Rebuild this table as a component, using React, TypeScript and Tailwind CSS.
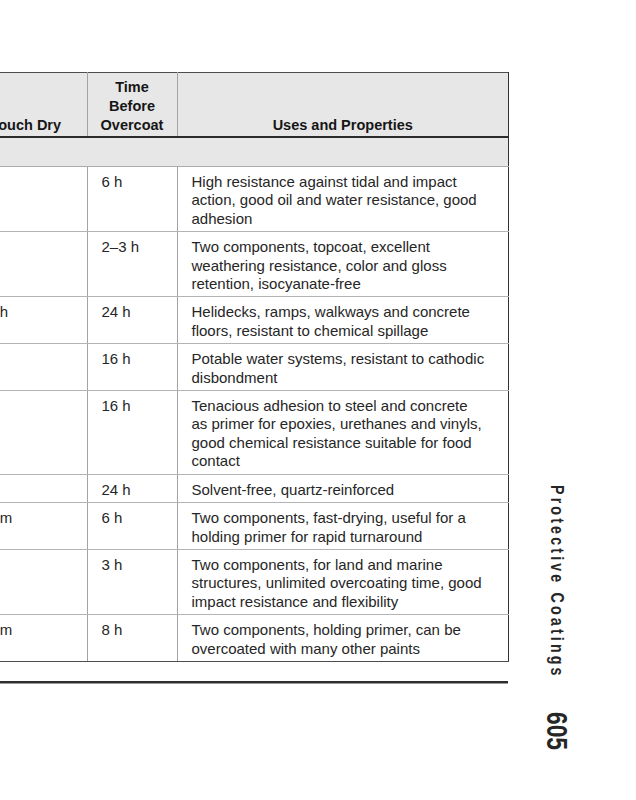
const rows = [
  {
    dry: "",
    time: "6 h",
    uses: ["High resistance against tidal and impact", "action, good oil and water resistance, good", "adhesion"],
  },
  {
    dry: "",
    time: "2–3 h",
    uses: ["Two components, topcoat, excellent", "weathering resistance, color and gloss", "retention, isocyanate-free"],
  },
  {
    dry: "24 h",
    time: "24 h",
    uses: ["Helidecks, ramps, walkways and concrete", "floors, resistant to chemical spillage"],
  },
  {
    dry: "",
    time: "16 h",
    uses: ["Potable water systems, resistant to cathodic", "disbondment"],
  },
  {
    dry: "",
    time: "16 h",
    uses: [
      "Tenacious adhesion to steel and concrete",
      "as primer for epoxies, urethanes and vinyls,",
      "good chemical resistance suitable for food",
      "contact",
    ],
  },
  {
    dry: "",
    time: "24 h",
    uses: ["Solvent-free, quartz-reinforced"],
  },
  {
    dry: "30 m",
    time: "6 h",
    uses: ["Two components, fast-drying, useful for a", "holding primer for rapid turnaround"],
  },
  {
    dry: "",
    time: "3 h",
    uses: ["Two components, for land and marine", "structures, unlimited overcoating time, good", "impact resistance and flexibility"],
  },
  {
    dry: "30 m",
    time: "8 h",
    uses: ["Two components, holding primer, can be", "overcoated with many other paints"],
  },
];

function CoatingsTable() {
  return (
    <table className="w-full table-fixed border-collapse text-[15px] leading-[18.4px] text-[#262626]">
      <colgroup>
        <col className="w-[122px]" />
        <col className="w-[90px]" />
        <col />
      </colgroup>
      <thead>
        <tr className="bg-[#e7e7e7] border-t border-t-[#4d4d4d] border-b-2 border-b-[#2b2b2b] text-[14.5px] leading-[19px] font-bold text-[#161616]">
          <th className="h-[64px] align-bottom pb-[1px] text-center border-r border-r-[#a3a3a3]">Touch Dry</th>
          <th className="align-bottom pb-[1px] text-center border-r border-r-[#a3a3a3]">
            Time
            <br />
            Before
            <br />
            Overcoat
          </th>
          <th className="align-bottom pb-[1px] text-center border-r border-r-[#333]">Uses and Properties</th>
        </tr>
      </thead>
      <tbody>
        <tr>
          <td colSpan={3} className="h-[30px] bg-[#e7e7e7] border-b border-b-[#ababab] border-r border-r-[#333]" />
        </tr>
        {rows.map((r, i) => {
          const last = i === rows.length - 1;
          const bottom = last ? "border-b border-b-[#4d4d4d]" : "border-b border-b-[#b4b4b4]";
          return (
            <tr key={i}>
              <td className={`align-top pt-[6px] pb-[3px] pl-[14px] whitespace-nowrap border-r border-r-[#a3a3a3] ${bottom}`}>
                {r.dry}
              </td>
              <td className={`align-top pt-[6px] pb-[3px] pl-[14px] border-r border-r-[#a3a3a3] ${bottom}`}>{r.time}</td>
              <td className={`align-top pt-[6px] pb-[3px] pl-[14px] pr-[6px] whitespace-nowrap border-r border-r-[#333] ${bottom}`}>
                {r.uses.map((line, j) => (
                  <div key={j}>{line}</div>
                ))}
              </td>
            </tr>
          );
        })}
      </tbody>
    </table>
  );
}

export default function App() {
  return (
    <div className="w-[636px] h-[800px] overflow-hidden flex bg-white font-['Liberation_Sans',Arial,sans-serif]">
      <div className="-ml-[35px] w-[544px] shrink-0 pt-[72px]">
        <CoatingsTable />
        <div className="mt-[19px] ml-[35px] mr-[1px] h-[3px] border-t-2 border-[#2e2e2e] border-b border-b-[#9a9a9a]" />
      </div>
      <div className="w-[96px] shrink-0 flex flex-col items-center pt-[485px] text-[#262626] font-bold">
        <div className="h-[190px]">
          <div className="[writing-mode:vertical-rl] whitespace-nowrap text-[19px] leading-[19px] tracking-[4.2px] scale-y-[0.75] origin-top">
            Protective Coatings
          </div>
        </div>
        <div className="mt-[37px] h-[38px]">
          <div className="[writing-mode:vertical-rl] whitespace-nowrap text-[30px] leading-[30px] scale-y-[0.76] origin-top">605</div>
        </div>
      </div>
    </div>
  );
}
